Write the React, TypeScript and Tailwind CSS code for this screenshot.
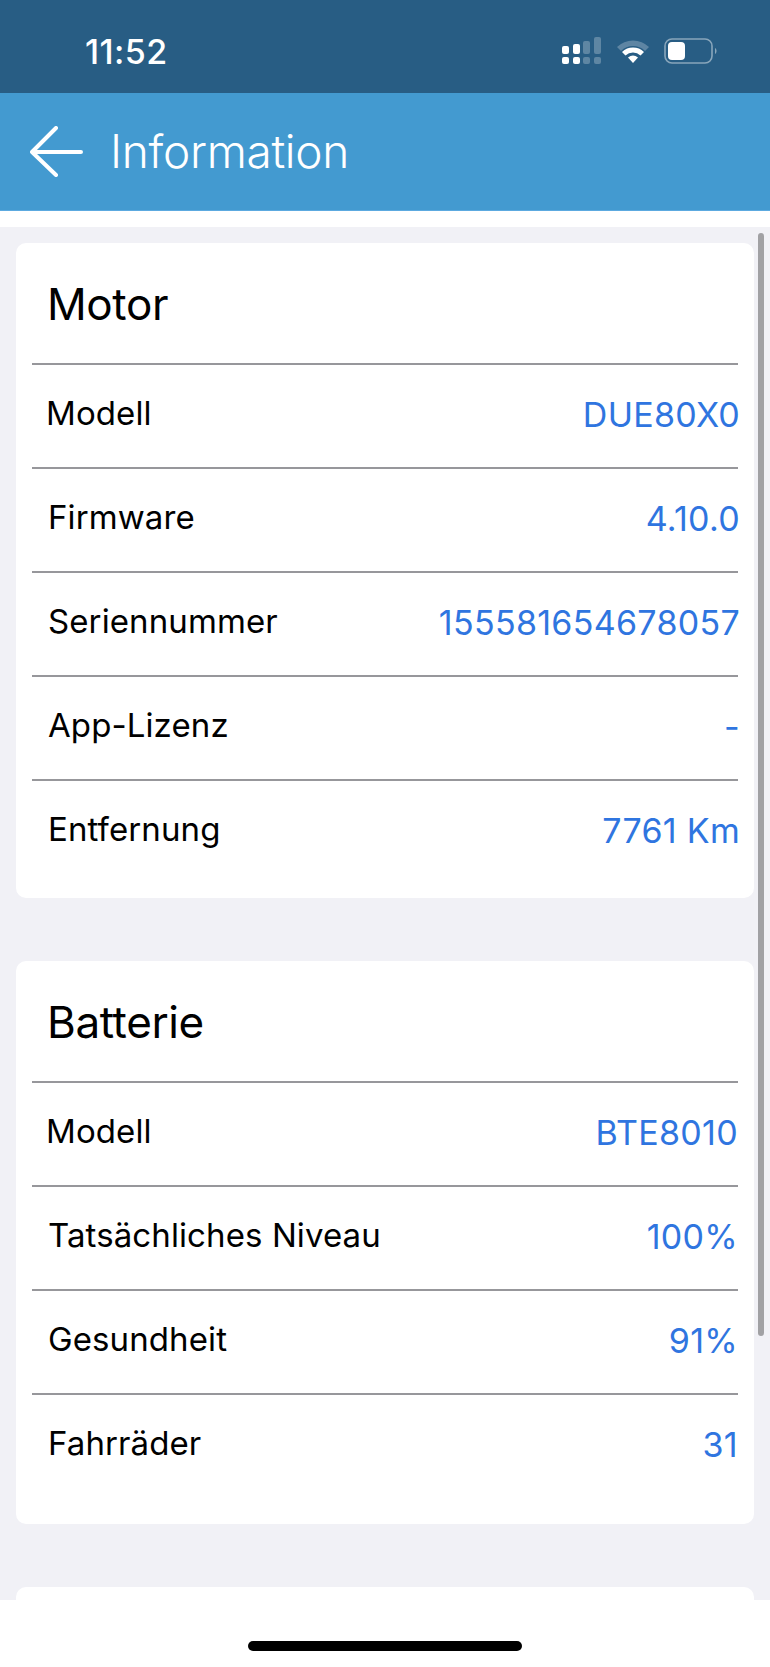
const F = "[font-family:Inter,'Liberation_Sans',sans-serif]";

function Row({ label, value, lx = "pl-[16px]", vx = "-mr-[2px]" }: { label: string; value: string; lx?: string; vx?: string }) {
  return (
    <div className={`flex h-[104px] items-center justify-between border-t-2 border-[#97979b] pb-[4px] ${lx}`}>
      <span className="text-[33px] tracking-[0.1px] text-black">{label}</span>
      <span className={`text-[34px] tracking-[0.3px] text-[#2f75e0] ${vx}`}>{value}</span>
    </div>
  );
}

function StatusIcons() {
  return (
    <div className="flex items-center">
      <svg width="40" height="28" viewBox="0 0 40 28" className="mr-[14px]">
        <g fill="#fff">
          <rect x="0" y="9" width="7" height="8" rx="2" />
          <rect x="0" y="20" width="7" height="7" rx="2" />
          <rect x="11" y="7" width="7" height="10" rx="2" />
          <rect x="11" y="20" width="7" height="7" rx="2" />
        </g>
        <g fill="#fff" opacity="0.25">
          <rect x="21" y="4" width="7" height="13" rx="2" />
          <rect x="21" y="20" width="7" height="7" rx="2" />
          <rect x="32" y="0" width="7" height="17" rx="2" />
          <rect x="32" y="20" width="7" height="7" rx="2" />
        </g>
      </svg>
      <svg width="34" height="26" viewBox="0 0 34 26" className="mr-[14px]">
        <path d="M1 9 A23 23 0 0 1 33 9 L29 13 A17 17 0 0 0 5 13 Z" fill="#fff" opacity="0.25" />
        <path d="M6 14 A16 16 0 0 1 28 14 L24.5 17.5 A11 11 0 0 0 9.5 17.5 Z" fill="#fff" />
        <path d="M12 19.5 A8 8 0 0 1 22 19.5 L17 25 Z" fill="#fff" />
      </svg>
      <svg width="54" height="26" viewBox="0 0 54 26">
        <rect x="1" y="1" width="47" height="24" rx="7" fill="none" stroke="#fff" strokeOpacity="0.45" strokeWidth="1.6" />
        <rect x="4" y="4" width="17" height="18" rx="4" fill="#fff" />
        <path d="M51 10 C53 11 53 15 51 16 Z" fill="#fff" opacity="0.45" />
      </svg>
    </div>
  );
}

export default function App() {
  return (
    <div className={`relative flex h-[1667px] w-[770px] flex-col overflow-hidden bg-white ${F}`}>
      <div className="flex h-[93px] items-center justify-between bg-[#285d84] pl-[85px] pr-[52px] pt-[9px]">
        <span className="text-[34px] font-medium tracking-[0.4px] text-white">11:52</span>
        <StatusIcons />
      </div>
      <div className="flex h-[118px] items-center border-b border-[#5caae0] bg-[#439ad0] pl-[29px]">
        <svg width="54" height="54" viewBox="0 0 54 54" fill="none" stroke="#fff" strokeWidth="4" strokeLinecap="round" strokeLinejoin="round" className="blur-[0.6px]">
          <path d="M52 27 H3 M27 3 L3 27 L27 50" />
        </svg>
        <span className="ml-[27px] text-[46px] font-light tracking-[-0.3px] text-white">Information</span>
      </div>
      <div className="mt-[16px] flex h-[1373px] flex-col gap-[63px] overflow-hidden bg-[#f1f1f6] px-[16px] pt-[16px]">
        <section className="h-[655px] shrink-0 rounded-[10px] bg-white px-[16px]">
          <h2 className="flex h-[120px] items-center pl-[15px] pt-[2px] text-[44px] font-normal tracking-[-0.4px] text-black">Motor</h2>
          <Row label="Modell" value="DUE80X0" lx="pl-[14px]" />
          <Row label="Firmware" value="4.10.0" />
          <Row label="Seriennummer" value="155581654678057" />
          <Row label="App-Lizenz" value="-" />
          <Row label="Entfernung" value="7761 Km" />
        </section>
        <section className="h-[563px] shrink-0 rounded-[10px] bg-white px-[16px]">
          <h2 className="flex h-[120px] items-center pl-[15px] pt-[2px] text-[44px] font-normal tracking-[-0.4px] text-black">Batterie</h2>
          <Row label="Modell" value="BTE8010" lx="pl-[14px]" vx="mr-0" />
          <Row label="Tatsächliches Niveau" value="100%" vx="mr-0" />
          <Row label="Gesundheit" value="91%" vx="mr-0" />
          <Row label="Fahrräder" value="31" vx="mr-0" />
        </section>
        <section className="h-[200px] shrink-0 rounded-[10px] bg-white" />
      </div>
      <div className="absolute left-[758px] top-[233px] h-[1103px] w-[6px] rounded-full bg-[#a1a1a4]" />
      <div className="absolute bottom-[16px] left-[248px] h-[10px] w-[274px] rounded-full bg-black" />
    </div>
  );
}
